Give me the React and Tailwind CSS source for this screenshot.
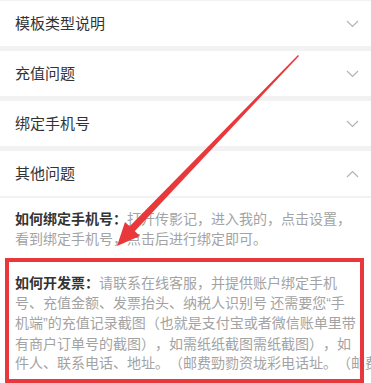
import React from "react";

const rows = ["模板类型说明", "充值问题", "绑定手机号"];

const Chevron = ({ up }) => (
  <svg width="13" height="8" viewBox="0 0 13 8" className="shrink-0">
    <polyline
      points={up ? "1,7 6.5,1.5 12,7" : "1,1 6.5,6.5 12,1"}
      fill="none"
      stroke="#b3b3b3"
      strokeWidth="1.2"
    />
  </svg>
);

const Row = ({ title, up }) => (
  <div className="flex h-[45px] items-center justify-between bg-white pl-[15px] pr-[12px]">
    <span className="text-[15px] text-[#333]">{title}</span>
    <Chevron up={up} />
  </div>
);

const Q = ({ children }) => <span className="font-['Liberation_Sans',sans-serif]">{children}</span>;

export default function App() {
  return (
    <div className="relative h-[383px] w-[371px] overflow-hidden bg-[#f2f2f2] pt-px font-['Noto_Sans_CJK_SC',sans-serif] [text-spacing-trim:space-all]">
      <div className="flex flex-col gap-[5px]">
        {rows.map((r) => (
          <Row key={r} title={r} />
        ))}
        <Row title="其他问题" up />
      </div>

      <div className="mt-[2px] h-[200px] bg-white px-[15px] pt-[11px] text-[14px] leading-[19.5px] text-[#a3a3a3]">
        <p>
          <span className="font-bold text-[#333]">如何绑定手机号：</span>
          打开传影记，进入我的，点击设置，看到绑定手机号，点击后进行绑定即可。
        </p>
        <div className="mt-[25px] whitespace-nowrap">
          <div>
            <span className="font-bold text-[#333]">如何开发票：</span>
            请联系在线客服，并提供账户绑定手机
          </div>
          <div>
            号、充值金额、发票抬头、纳税人识别号 还需要您<Q>“</Q>手
          </div>
          <div>
            机端<Q>”</Q>的充值记录截图（也就是支付宝或者微信账单里带
          </div>
          <div>有商户订单号的截图），如需纸纸截图需纸截图），如</div>
          <div>件人、联系电话、地址。（邮费勁勠资垅彩电话址。（邮费</div>
        </div>
      </div>

      {/* annotation box */}
      <div className="pointer-events-none absolute left-[5px] top-[258px] h-[125px] w-[359px] border-[4px] border-[#e8383b]" />

      {/* annotation arrow */}
      <svg className="pointer-events-none absolute left-0 top-0" width="371" height="383" viewBox="0 0 371 383">
        <polygon points="298,55 299,56 134,232 129,227" fill="#e8383b" />
        <polygon points="117,246 125,222 140,236" fill="#e8383b" />
      </svg>
    </div>
  );
}
